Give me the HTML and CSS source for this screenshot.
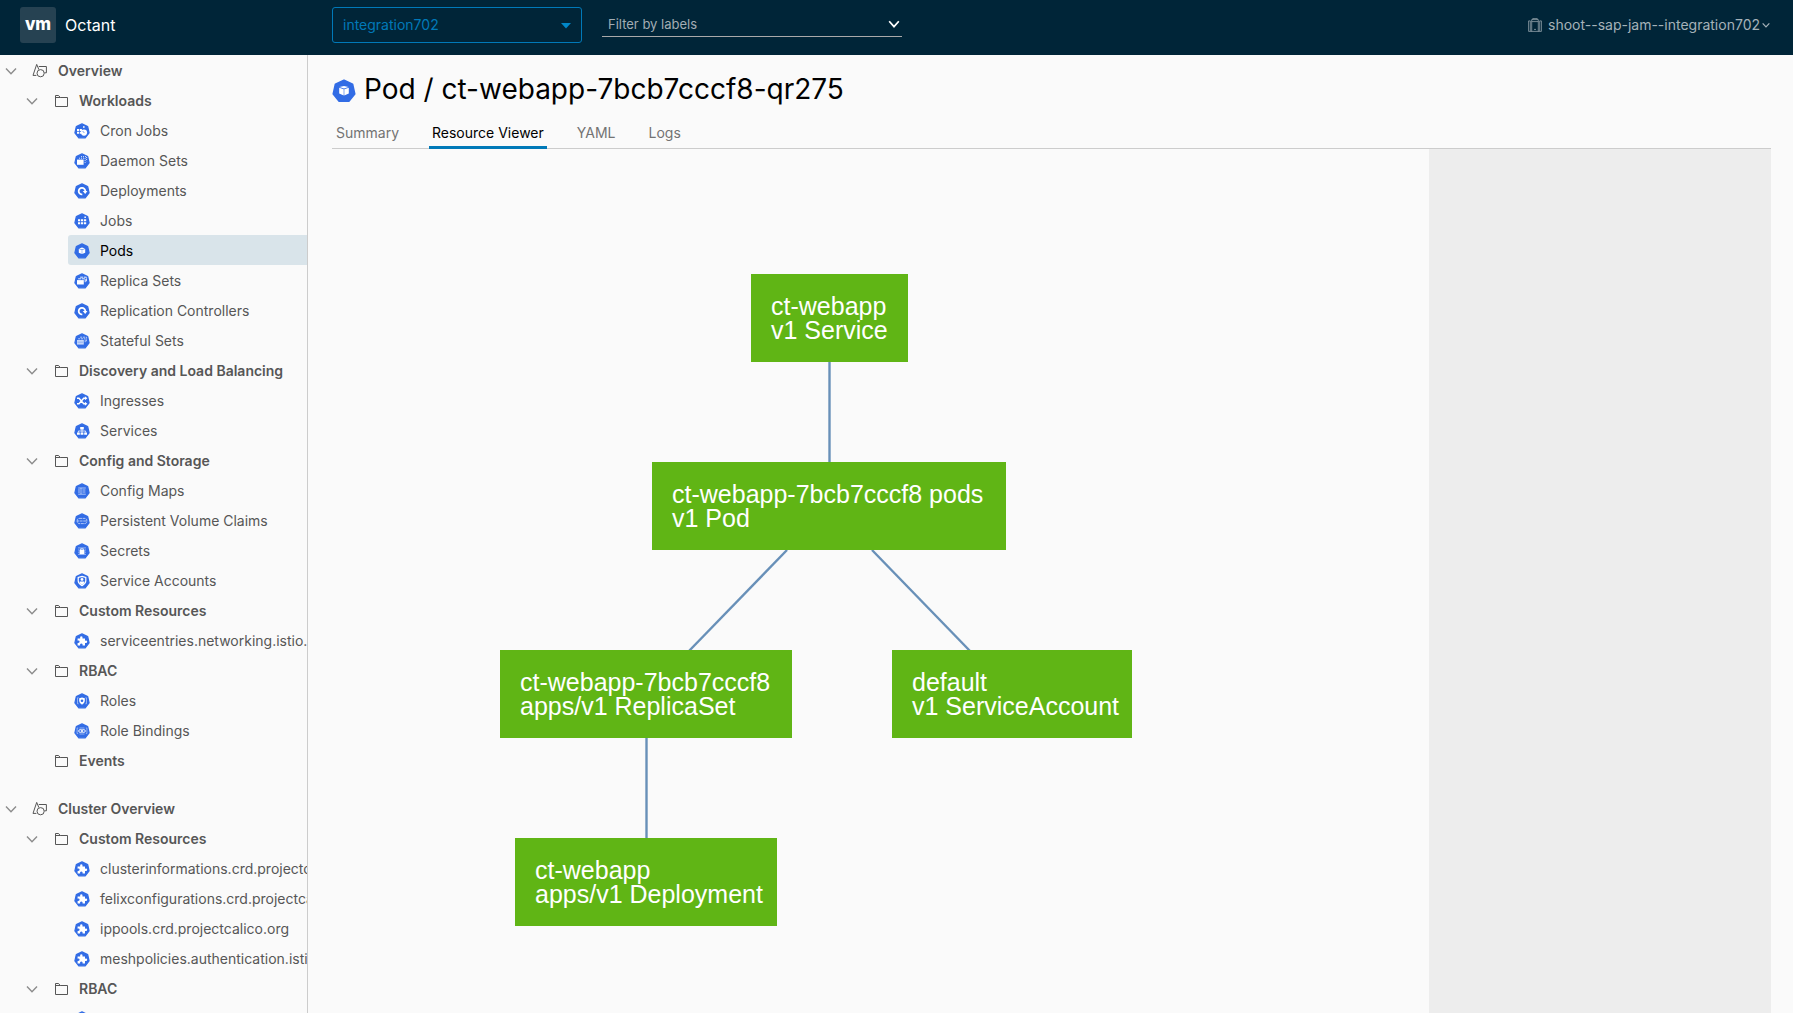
FILE: index.html
```html
<!DOCTYPE html>
<html lang="en">
<head>
<meta charset="utf-8">
<title>Octant</title>
<link rel="stylesheet" href="styles.css">
</head>
<body>
<svg class="sprite" aria-hidden="true">
  <symbol id="hept" viewBox="0 0 16 16"><path d="M8 .9 13.7 3.6 15.1 9.9 11.2 14.8H4.8L.9 9.9 2.3 3.6Z" fill="#326ce5" stroke="#326ce5" stroke-width="1.2" stroke-linejoin="round"/></symbol>
  <symbol id="chev" viewBox="0 0 12 12"><path d="M1 3.5 6 8.8 11 3.5" fill="none" stroke="currentColor" stroke-width="1.4"/></symbol>
  <symbol id="folder" viewBox="0 0 14 14"><path d="M1.5 12.5V1.5H4.6L6.2 3.5H13.5V12.5ZM1.5 3.5H6" fill="none" stroke="currentColor" stroke-width="1"/></symbol>
  <symbol id="shapes" viewBox="0 0 16 16"><g fill="none" stroke="currentColor" stroke-width="1"><path d="M4.4 12.4H1L4.7 1.4 6.9 6.6M6.8 3.5H14.4V9.8H12.4"/><circle cx="8.6" cy="10.2" r="3.6"/></g></symbol>
  <symbol id="cron" viewBox="0 0 16 16"><use href="#hept"/><path d="M3 6h2.1v2H3zM5.8 6h2.1v2H5.8zM3 8.8h2.1v2H3zM5.8 8.8h1.4v2H5.8zM9 3.3h1.6v1.5H9z" fill="#fff"/><circle cx="10" cy="9.6" r="3.1" fill="#fff"/><path d="M8.8 8.2 10.2 9.8" stroke="#326ce5" stroke-width=".8"/></symbol>
  <symbol id="daemon" viewBox="0 0 16 16"><use href="#hept"/><path d="M3 6.6h6.6v5.2H3z" fill="#fff"/><path d="M5 5.2h6.1v4.8M7 3.6h5.6v4.6" fill="none" stroke="#fff" stroke-width=".8" stroke-dasharray="1 1"/></symbol>
  <symbol id="deploy" viewBox="0 0 16 16"><use href="#hept"/><path d="M8.3 11.4A3.3 3.3 0 1 1 11.3 8.2" fill="none" stroke="#fff" stroke-width="1.8"/><path d="M8.7 8h4.7L11.2 10.9Z" fill="#fff"/></symbol>
  <symbol id="job" viewBox="0 0 16 16"><use href="#hept"/><path d="M4 6.3h2.2v2H4zM7 6.3h2.2v2H7zM10 6.3h2.2v2H10zM4 9.3h2.2v2H4zM7 9.3h2.2v2H7zM10 9.3h2.2v2H10zM10.4 3.6h1.5v1.5h-1.5z" fill="#fff"/></symbol>
  <symbol id="pod" viewBox="0 0 16 16"><use href="#hept"/><path d="M8 4.6 11 5.4 8 6.3 5 5.4ZM4.8 5.9 7.8 6.8V11L4.8 9.7ZM11.2 5.9 8.2 6.8V11L11.2 9.7Z" fill="#fff"/></symbol>
  <symbol id="replica" viewBox="0 0 16 16"><use href="#hept"/><path d="M3 7.1h6.8v4.4H3z" fill="#fff"/><path d="M4.2 5.8h7V9.8M6.2 4.2h6.2V8.3" fill="none" stroke="#fff" stroke-width=".9" stroke-dasharray="3 .7"/></symbol>
  <symbol id="stateful" viewBox="0 0 16 16"><use href="#hept"/><path d="M3 7h6.8v4.6H3z" fill="#c6d6f8"/><path d="M3.5 9.2h5.8" stroke="#7ba0ef" stroke-width=".7"/><path d="M4.2 5.8h7V9.8M6.2 4.2h6.2V8.3" fill="none" stroke="#c6d6f8" stroke-width=".9" stroke-dasharray="2 .8"/></symbol>
  <symbol id="ingress" viewBox="0 0 16 16"><use href="#hept"/><path d="M3 5.2H5L9.7 10.8H12M3 10.8H5L9.7 5.2H12" fill="none" stroke="#fff" stroke-width="1.4"/><path d="M10.9 3.2 13.4 5.2 10.9 7.2ZM10.9 8.8 13.4 10.8 10.9 12.8Z" fill="#fff"/></symbol>
  <symbol id="service" viewBox="0 0 16 16"><use href="#hept"/><path d="M6.2 4h3.6v2.4H6.2zM3 9.4h2.8v2.3H3zM6.6 9.4h2.8v2.3H6.6zM10.2 9.4H13v2.3h-2.8z" fill="#fff"/><path d="M8 6V9.5M4.4 9.5V8H11.6V9.5" fill="none" stroke="#fff" stroke-width=".8"/></symbol>
  <symbol id="config" viewBox="0 0 16 16"><use href="#hept"/><path d="M4.2 5H11.8M4.2 11.2H11.8M4 7h2M4 9h2M7 5v6M8.4 7h3M8.4 9h3" fill="none" stroke="#b9cdf8" stroke-width=".9"/></symbol>
  <symbol id="pvc" viewBox="0 0 16 16"><use href="#hept"/><path d="M3.2 8V6.6L4.8 5.4H11.2L12.8 6.6V9.4L11.2 10.6H4.8L3.2 9.4V8H12.8" fill="none" stroke="#b9cdf8" stroke-width=".9" stroke-dasharray="3 .6"/></symbol>
  <symbol id="secret" viewBox="0 0 16 16"><use href="#hept"/><path d="M4 4.9H12M4 11.4H12M4 7H5.4M4 9.2H5.4M10.8 7H12M10.8 9.2H12" stroke="#a9c1f5" stroke-width=".8"/><path d="M5.6 6.8h4.8v4.4H5.6z" fill="#fff"/><path d="M6.7 7V5.8H9.3V7" fill="none" stroke="#fff" stroke-width=".8"/></symbol>
  <symbol id="account" viewBox="0 0 16 16"><use href="#hept"/><path d="M8 3.3 11.8 4.4V8Q11.6 10.8 8 12.6 4.4 10.8 4.2 8V4.4Z" fill="none" stroke="#fff" stroke-width="1.2"/><circle cx="8" cy="6.4" r="1.4" fill="#fff"/><path d="M5.7 10.3V8.5H10.3V10.3L8 11.7Z" fill="#fff"/></symbol>
  <symbol id="crd" viewBox="0 0 16 16"><use href="#hept"/><path d="M3.6 5.4H6.2Q5.6 3.3 7.3 3.3 9 3.3 8.5 5.4H11V7.7Q13.2 7.1 13.2 8.8 13.2 10.4 11 9.9V12.4H8.6Q9 10.5 7.3 10.5 5.6 10.5 6.1 12.4H3.6V9.9Q5.6 10.2 5.6 8.8 5.6 7.3 3.6 7.7Z" fill="#fff"/></symbol>
  <symbol id="role" viewBox="0 0 16 16"><use href="#hept"/><path d="M4.6 4.8H3.5V10.8H4.6M11.4 4.8H12.5V10.8H11.4" fill="none" stroke="#a9c1f5" stroke-width=".8"/><path d="M8 4.4 10.8 5.2V8Q10.6 10.3 8 11.8 5.4 10.3 5.2 8V5.2Z" fill="#fff"/><circle cx="8" cy="7.8" r="1.3" fill="#326ce5"/></symbol>
  <symbol id="binding" viewBox="0 0 16 16"><use href="#hept"/><path d="M4.2 5H3.1V10.6H4.2M11.8 5H12.9V10.6H11.8M5.5 5H10.5M5.5 11H10.5" fill="none" stroke="#a9c1f5" stroke-width=".8"/><rect x="4.7" y="6.7" width="3.9" height="2.6" rx="1.3" fill="none" stroke="#e5ecfc" stroke-width="1"/><rect x="7.4" y="6.7" width="3.9" height="2.6" rx="1.3" fill="none" stroke="#e5ecfc" stroke-width="1"/></symbol>
</svg>

<header class="header">
  <a class="brand" href="#"><span class="logo">vm</span><span class="brand-name">Octant</span></a>
  <div class="header-tools">
    <div class="namespace">
      <select aria-label="Namespace"><option>integration702</option></select>
      <svg class="namespace-arrow" viewBox="0 0 10 6" aria-hidden="true"><path d="M0 0H10L5 5.5Z" fill="#0088c9"/></svg>
    </div>
    <div class="filter">
      <input type="text" placeholder="Filter by labels" aria-label="Filter by labels">
      <svg viewBox="0 0 12 12" aria-hidden="true"><path d="M1.2 3.2 6 8.6 10.8 3.2" fill="none" stroke="#fff" stroke-width="1.7"/></svg>
    </div>
  </div>
  <button class="context" type="button">
    <svg class="context-icon" viewBox="0 0 14 14" aria-hidden="true"><path d="M3.7 13.4V1.6H10.3V13.4M3.7 3.6H10.3M.6 13.4V2.9H2.3V13.4ZM11.7 13.4V2.9H13.4V13.4ZM2.3 13.4H11.7M4.7 1.5V.6H9.3V1.5M6 11.4H8" fill="none" stroke="currentColor" stroke-width=".7"/></svg>
    <span>shoot--sap-jam--integration702</span>
    <svg class="context-chev" viewBox="0 0 12 12" aria-hidden="true"><path d="M1 3.5 6 8.8 11 3.5" fill="none" stroke="currentColor" stroke-width="1.8"/></svg>
  </button>
</header>

<div class="shell">
  <nav class="sidebar" aria-label="Navigation">
    <section class="module">
      <div class="row module-row"><button class="toggle" type="button" aria-label="Collapse Overview"><svg><use href="#chev"/></svg></button><a href="#"><svg><use href="#shapes"/></svg>Overview</a></div>
      <div class="row group-row"><button class="toggle" type="button" aria-label="Collapse Workloads"><svg><use href="#chev"/></svg></button><a href="#"><svg><use href="#folder"/></svg>Workloads</a></div>
      <ul class="leaves">
        <li><a class="leaf" href="#"><svg><use href="#cron"/></svg>Cron Jobs</a></li>
        <li><a class="leaf" href="#"><svg><use href="#daemon"/></svg>Daemon Sets</a></li>
        <li><a class="leaf" href="#"><svg><use href="#deploy"/></svg>Deployments</a></li>
        <li><a class="leaf" href="#"><svg><use href="#job"/></svg>Jobs</a></li>
        <li><a class="leaf active" href="#" aria-current="page"><svg><use href="#pod"/></svg>Pods</a></li>
        <li><a class="leaf" href="#"><svg><use href="#replica"/></svg>Replica Sets</a></li>
        <li><a class="leaf" href="#"><svg><use href="#deploy"/></svg>Replication Controllers</a></li>
        <li><a class="leaf" href="#"><svg><use href="#stateful"/></svg>Stateful Sets</a></li>
      </ul>
      <div class="row group-row"><button class="toggle" type="button" aria-label="Collapse Discovery and Load Balancing"><svg><use href="#chev"/></svg></button><a href="#"><svg><use href="#folder"/></svg>Discovery and Load Balancing</a></div>
      <ul class="leaves">
        <li><a class="leaf" href="#"><svg><use href="#ingress"/></svg>Ingresses</a></li>
        <li><a class="leaf" href="#"><svg><use href="#service"/></svg>Services</a></li>
      </ul>
      <div class="row group-row"><button class="toggle" type="button" aria-label="Collapse Config and Storage"><svg><use href="#chev"/></svg></button><a href="#"><svg><use href="#folder"/></svg>Config and Storage</a></div>
      <ul class="leaves">
        <li><a class="leaf" href="#"><svg><use href="#config"/></svg>Config Maps</a></li>
        <li><a class="leaf" href="#"><svg><use href="#pvc"/></svg>Persistent Volume Claims</a></li>
        <li><a class="leaf" href="#"><svg><use href="#secret"/></svg>Secrets</a></li>
        <li><a class="leaf" href="#"><svg><use href="#account"/></svg>Service Accounts</a></li>
      </ul>
      <div class="row group-row"><button class="toggle" type="button" aria-label="Collapse Custom Resources"><svg><use href="#chev"/></svg></button><a href="#"><svg><use href="#folder"/></svg>Custom Resources</a></div>
      <ul class="leaves">
        <li><a class="leaf" href="#"><svg><use href="#crd"/></svg>serviceentries.networking.istio.io</a></li>
      </ul>
      <div class="row group-row"><button class="toggle" type="button" aria-label="Collapse RBAC"><svg><use href="#chev"/></svg></button><a href="#"><svg><use href="#folder"/></svg>RBAC</a></div>
      <ul class="leaves">
        <li><a class="leaf" href="#"><svg><use href="#role"/></svg>Roles</a></li>
        <li><a class="leaf" href="#"><svg><use href="#binding"/></svg>Role Bindings</a></li>
      </ul>
      <div class="row group-row no-toggle"><a href="#"><svg><use href="#folder"/></svg>Events</a></div>
    </section>
    <section class="module">
      <div class="row module-row"><button class="toggle" type="button" aria-label="Collapse Cluster Overview"><svg><use href="#chev"/></svg></button><a href="#"><svg><use href="#shapes"/></svg>Cluster Overview</a></div>
      <div class="row group-row"><button class="toggle" type="button" aria-label="Collapse Custom Resources"><svg><use href="#chev"/></svg></button><a href="#"><svg><use href="#folder"/></svg>Custom Resources</a></div>
      <ul class="leaves">
        <li><a class="leaf" href="#"><svg><use href="#crd"/></svg>clusterinformations.crd.projectcalico.org</a></li>
        <li><a class="leaf" href="#"><svg><use href="#crd"/></svg>felixconfigurations.crd.projectcalico.org</a></li>
        <li><a class="leaf" href="#"><svg><use href="#crd"/></svg>ippools.crd.projectcalico.org</a></li>
        <li><a class="leaf" href="#"><svg><use href="#crd"/></svg>meshpolicies.authentication.istio.io</a></li>
      </ul>
      <div class="row group-row"><button class="toggle" type="button" aria-label="Collapse RBAC"><svg><use href="#chev"/></svg></button><a href="#"><svg><use href="#folder"/></svg>RBAC</a></div>
      <ul class="leaves">
        <li><a class="leaf" href="#" aria-label="Cluster Roles"><svg><use href="#role"/></svg></a></li>
      </ul>
    </section>
  </nav>

  <main class="main">
    <h1 class="title"><svg viewBox="1 0 14 16" aria-hidden="true"><use href="#pod" width="16" height="16"/></svg>Pod / ct-webapp-7bcb7cccf8-qr275</h1>
    <div class="tabs" role="tablist">
      <button type="button" role="tab" aria-selected="false">Summary</button>
      <button type="button" role="tab" aria-selected="true">Resource Viewer</button>
      <button type="button" role="tab" aria-selected="false">YAML</button>
      <button type="button" role="tab" aria-selected="false">Logs</button>
    </div>
    <div class="viewer">
      <div class="graph">
        <svg class="edges" aria-hidden="true">
          <g stroke="#6890b8" stroke-width="2.4">
            <path d="M497.5 213V313"/>
            <path d="M455 401 357 502"/>
            <path d="M540 401 638 502"/>
            <path d="M314.5 589V690"/>
          </g>
        </svg>
        <div class="node node-service">ct-webapp<br>v1 Service</div>
        <div class="node node-pod">ct-webapp-7bcb7cccf8 pods<br>v1 Pod</div>
        <div class="node node-replicaset">ct-webapp-7bcb7cccf8<br>apps/v1 ReplicaSet</div>
        <div class="node node-account">default<br>v1 ServiceAccount</div>
        <div class="node node-deployment">ct-webapp<br>apps/v1 Deployment</div>
      </div>
      <aside class="details" aria-label="Details"></aside>
    </div>
  </main>
</div>
</body>
</html>
```
FILE: styles.css
```css
* { box-sizing: border-box; }

body {
  margin: 0;
  height: 100vh;
  display: flex;
  flex-direction: column;
  overflow: hidden;
  background: #fafafa;
  color: #565656;
  font: 14px/30px Inter, "Liberation Sans", sans-serif;
}

a { color: inherit; text-decoration: none; }

button, input, select {
  margin: 0;
  padding: 0;
  border: 0;
  border-radius: 0;
  background: none;
  color: inherit;
  font: inherit;
}

.sprite { position: absolute; width: 0; height: 0; }

/* Header */
.header {
  flex: none;
  display: flex;
  align-items: flex-start;
  height: 55px;
  padding: 7px 23px 0 20px;
  background: #002538;
  color: #fff;
}

.brand {
  flex: none;
  display: flex;
  align-items: center;
  gap: 9px;
  width: 312px;
  line-height: 36px;
}

.logo {
  width: 36px;
  height: 36px;
  border-radius: 3px;
  background: #264252;
  font-size: 17px;
  font-weight: 800;
  line-height: 34px;
  text-align: center;
}

.brand-name { font-size: 16px; line-height: 34px; }

.header-tools { flex: 1; display: flex; gap: 20px; }

.namespace { position: relative; width: 250px; }

.namespace select {
  width: 100%;
  height: 36px;
  padding: 0 10px;
  border: 1px solid #0079b8;
  border-radius: 3px;
  color: #0079b8;
  font-size: 14px;
  appearance: none;
}

.namespace-arrow {
  position: absolute;
  top: 16px;
  right: 11px;
  width: 10px;
  height: 6px;
}

.filter {
  display: flex;
  align-items: center;
  width: 300px;
  height: 30px;
  padding: 4px 2px 0 6px;
  border-bottom: 1px solid #a9a9a9;
}

.filter input { flex: 1; min-width: 0; font-size: 13px; line-height: 24px; outline: 0; }
.filter input::placeholder { color: #a3adb4; opacity: 1; }
.filter svg { width: 12px; height: 12px; }

.context {
  display: flex;
  align-items: center;
  height: 36px;
  color: #a5b2b9;
}

.context-icon { width: 14px; height: 14px; margin-right: 6px; }
.context-chev { width: 8px; height: 8px; margin-left: 2px; }

/* Page body */
.shell { flex: 1; min-height: 0; display: flex; }

.sidebar {
  flex: none;
  width: 308px;
  overflow: hidden;
  border-right: 1px solid #ccc;
}

.module { margin-bottom: 18px; }

.row { display: flex; align-items: center; height: 30px; padding-top: 2px; color: #565656; font-weight: 600; }
.row a { display: flex; align-items: center; white-space: nowrap; }

.toggle { display: flex; width: 12px; height: 12px; color: #8c8c8c; }
.toggle svg { width: 12px; height: 12px; }

.module-row { padding-left: 5px; }
.module-row a { gap: 10px; margin-left: 15px; }
.module-row a svg { width: 16px; height: 16px; }

.group-row { padding-left: 26px; }
.group-row a { gap: 11px; margin-left: 16px; }
.group-row a svg { width: 14px; height: 14px; }
.no-toggle { padding-left: 38px; }

.leaves { margin: 0; padding: 0 0 0 68px; list-style: none; }

.leaf {
  display: flex;
  align-items: center;
  gap: 10px;
  height: 30px;
  padding: 2px 0 0 6px;
  border-radius: 3px 0 0 3px;
  white-space: nowrap;
}

.leaf svg { flex: none; width: 16px; height: 16px; }
.leaf.active { background: #d9e4ea; color: #000; }

.main {
  flex: 1;
  min-width: 0;
  display: flex;
  flex-direction: column;
  padding: 14px 22px 0 24px;
}

.title {
  display: flex;
  align-items: center;
  gap: 8px;
  margin: 0;
  color: #000;
  font-size: 28px;
  font-weight: 400;
  line-height: 40px;
}

.title svg { width: 24px; height: 24px; margin-top: 4px; }

.tabs {
  display: flex;
  gap: 27px;
  margin-top: 8px;
  padding-left: 1px;
  border-bottom: 1px solid #ccc;
}

.tabs button {
  height: 32px;
  margin-bottom: -1px;
  padding: 2px 3px 0;
  border-bottom: 3px solid transparent;
  color: #737373;
  line-height: 27px;
}

.tabs [aria-selected="true"] { border-color: #0079b8; color: #000; }

/* Resource graph */
.viewer { flex: 1; min-height: 0; display: flex; }
.graph { position: relative; flex: 1; overflow: hidden; }
.details { flex: none; width: 342px; background: #ededed; }
.edges { display: block; width: 100%; height: 100%; }

.node {
  position: absolute;
  height: 88px;
  padding: 20px;
  background: #60b515;
  color: #fff;
  font: 25px/24px "Liberation Sans", sans-serif;
  white-space: nowrap;
}

.node-service { left: 419px; top: 125px; width: 157px; }
.node-pod { left: 320px; top: 313px; width: 354px; }
.node-replicaset { left: 168px; top: 501px; width: 292px; }
.node-account { left: 560px; top: 501px; width: 240px; }
.node-deployment { left: 183px; top: 689px; width: 262px; }
```
